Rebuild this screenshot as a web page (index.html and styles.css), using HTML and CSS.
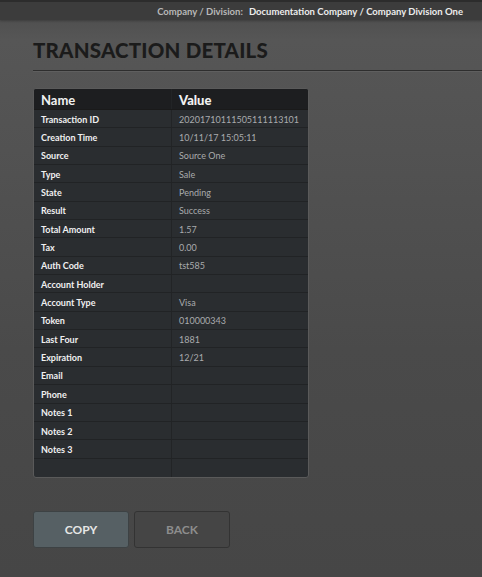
FILE: index.html
```html
<!DOCTYPE html>
<html>
<head>
<meta charset="utf-8">
<link rel="stylesheet" href="styles.css">
</head>
<body>
<div class="topbar">
  <span class="label">Company / Division:</span>
  <span class="value">Documentation Company / Company Division One</span>
</div>
<div class="page">
  <h1 class="title">TRANSACTION DETAILS</h1>
  <div class="rule"></div>
  <div class="table">
    <div class="row head"><div class="c1">Name</div><div class="c2">Value</div></div>
    <div class="row"><div class="c1">Transaction ID</div><div class="c2">20201710111505111113101</div></div>
    <div class="row"><div class="c1">Creation Time</div><div class="c2">10/11/17 15:05:11</div></div>
    <div class="row"><div class="c1">Source</div><div class="c2">Source One</div></div>
    <div class="row"><div class="c1">Type</div><div class="c2">Sale</div></div>
    <div class="row"><div class="c1">State</div><div class="c2">Pending</div></div>
    <div class="row"><div class="c1">Result</div><div class="c2">Success</div></div>
    <div class="row"><div class="c1">Total Amount</div><div class="c2">1.57</div></div>
    <div class="row"><div class="c1">Tax</div><div class="c2">0.00</div></div>
    <div class="row"><div class="c1">Auth Code</div><div class="c2">tst585</div></div>
    <div class="row"><div class="c1">Account Holder</div><div class="c2"></div></div>
    <div class="row"><div class="c1">Account Type</div><div class="c2">Visa</div></div>
    <div class="row"><div class="c1">Token</div><div class="c2">010000343</div></div>
    <div class="row"><div class="c1">Last Four</div><div class="c2">1881</div></div>
    <div class="row"><div class="c1">Expiration</div><div class="c2">12/21</div></div>
    <div class="row"><div class="c1">Email</div><div class="c2"></div></div>
    <div class="row"><div class="c1">Phone</div><div class="c2"></div></div>
    <div class="row"><div class="c1">Notes 1</div><div class="c2"></div></div>
    <div class="row"><div class="c1">Notes 2</div><div class="c2"></div></div>
    <div class="row"><div class="c1">Notes 3</div><div class="c2"></div></div>
    <div class="row last"><div class="c1"></div><div class="c2"></div></div>
  </div>
  <div class="buttons">
    <button class="btn copy">COPY</button>
    <button class="btn back">BACK</button>
  </div>
</div>
</body>
</html>
```
FILE: styles.css
```css
html, body {
  margin: 0;
  padding: 0;
}
body {
  width: 482px;
  height: 577px;
  overflow: hidden;
  font-family: "Lato", "Open Sans", sans-serif;
  background: linear-gradient(to bottom, #4a4a4a 0px, #565656 40px, #525252 150px, #4a4a4a 350px, #464646 577px);
}
.topbar {
  height: 18px;
  border-top: 2px solid #2c2c2c;
  background: #3c3c3c;
  display: flex;
  justify-content: flex-end;
  align-items: center;
  padding-right: 19px;
  font-size: 9.5px;
  box-shadow: 0 1px 2px rgba(0,0,0,0.25);
}
.topbar .label {
  color: #b8b8b8;
  font-weight: 700;
  margin-right: 6px;
}
.topbar .value {
  color: #ececec;
  font-weight: 700;
}
.page {
  padding-left: 33px;
}
.title {
  margin: 19px 0 0 0;
  font-size: 20.5px;
  font-weight: 900;
  color: #1b1b1b;
  line-height: 22px;
  letter-spacing: 0.2px;
}
.rule {
  margin-top: 9px;
  height: 1px;
  background: #2e2e2e;
  box-shadow: 0 1px 0 rgba(255,255,255,0.06);
}
.table {
  margin-top: 17px;
  width: 274px;
  border: 1px solid #5a5a5a;
  border-radius: 3px;
  background: #2a2d30;
  overflow: hidden;
}
.row {
  display: flex;
  height: 18.35px;
  border-bottom: 1px solid #212325;
  box-sizing: border-box;
  align-items: center;
  font-size: 9px;
  flex-shrink: 0;
}
.row.last {
  border-bottom: none;
}
.row.head {
  height: 21px;
  background: #1d1e20;
  font-size: 13px;
  font-weight: 900;
  color: #f2f2f2;
  border-bottom: 1px solid #1a1a1a;
}
.c1 {
  width: 138px;
  box-sizing: border-box;
  padding-left: 7px;
  padding-top: 1px;
  align-self: stretch;
  display: flex;
  align-items: center;
  border-right: 1px solid #222426;
  font-weight: 700;
  color: #f0f0f0;
}
.c2 {
  flex: 1;
  padding-left: 7px;
  padding-top: 1px;
  color: #a9abad;
  align-self: stretch;
  display: flex;
  align-items: center;
}
.row.head .c2 {
  color: #f2f2f2;
  font-weight: 900;
}
.buttons {
  margin-top: 33px;
  display: flex;
  gap: 5px;
}
.btn {
  width: 96px;
  height: 37px;
  border-radius: 3px;
  font-family: "Lato", "Open Sans", sans-serif;
  font-size: 12px;
  font-weight: 700;
  cursor: pointer;
}
.btn.copy {
  background: #566064;
  border: 1px solid #3d4244;
  color: #e6e6e6;
}
.btn.back {
  background: #454545;
  border: 1px solid #333;
  color: #8d8d8d;
}
```
